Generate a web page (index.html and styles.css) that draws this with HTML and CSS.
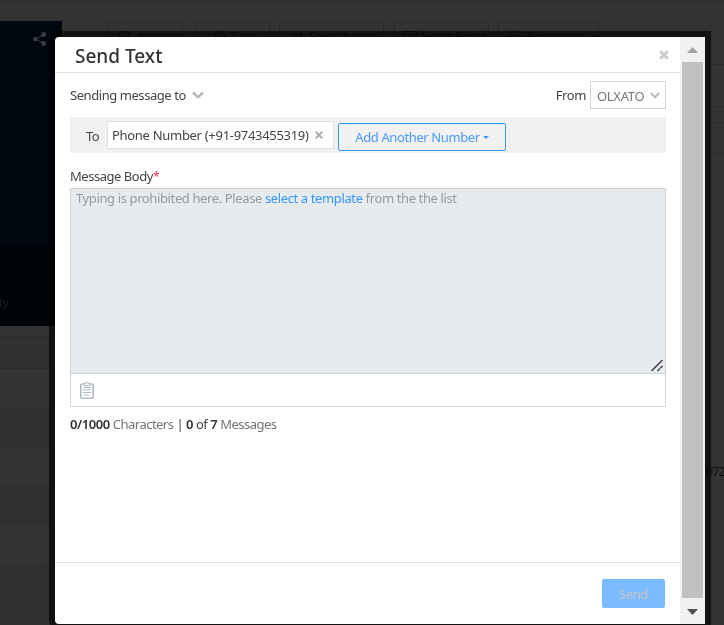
FILE: index.html
```html
<!DOCTYPE html>
<html lang="en">
<head>
<meta charset="utf-8">
<title>Send Text</title>
<link rel="stylesheet" href="styles.css">
</head>
<body>
<div class="page">
  <div class="left">
    <div class="profile">
      <div class="profile-top">
        <svg class="share" width="14" height="14" viewBox="0 0 14 14"><path d="M11 2.500 3 7l8 4.500" fill="none" stroke="#393d40"/><circle cx="10.700" cy="2.500" r="2.400"/><circle cx="2.300" cy="7" r="2.300"/><circle cx="10.700" cy="11.500" r="2.400"/></svg>
      </div>
      <div class="profile-bottom">ty</div>
    </div>
    <div class="row first"></div>
    <div class="row head"></div>
    <div class="row r1"></div>
    <div class="row odd"></div>
    <div class="row"></div>
    <div class="row odd"></div>
    <div class="row"></div>
    <div class="row odd last"></div>
  </div>
  <div class="middle">
    <div class="tool b1"><svg width="14" height="13" viewBox="0 0 14 13"><path d="M.5 12V2h10v3M1 1h10M6 8a3 3 0 1 1 6 0 3 3 0 0 1-6 0"/></svg>Activity</div>
    <div class="tool b2"><svg width="12" height="13" viewBox="0 0 12 13"><path d="M1 2h10v10H1zM4 2V0h4v2M3 7l2 2 3-4"/></svg>Task</div>
    <div class="tool b3"><svg width="14" height="12" viewBox="0 0 14 12"><path d="M0 1h2l3 9h6M3 3h4M10 1v5M8 2l4 3M12 2l-4 3"/></svg>Sales Activ...</div>
    <div class="tool b4"><svg width="14" height="11" viewBox="0 0 14 11"><path d="M.5.500h13v10H.500zl6.500 6 6.500-6"/></svg>Send Email</div>
    <div class="tool b5"><svg width="14" height="12" viewBox="0 0 14 12"><path d="M0 1h8M0 5h13v6H0zM10 1h3"/></svg>Processes<i class="tri"></i></div>
  </div>
  <div class="right">
    <div class="r a"></div><div class="r b"></div><div class="r c"></div><div class="r d"></div>
    <span class="num">072</span>
  </div>
</div>
<div class="modal">
  <div class="content">
    <header>
      <h1><span class="title">Send Text</span></h1>
      <svg class="close" width="10" height="10" viewBox="0 0 10 10"><path d="m1.200 1.200 7.600 7.600m0-7.600L1.200 8.800" fill="none" stroke="#ccc" stroke-width="3"/></svg>
    </header>
    <main>
      <div class="sender">
        <span class="sending">Sending message to</span>
        <svg class="chev" width="12" height="8" viewBox="0 0 12 8"><path d="m1 1.500 5 4.700 5-4.700" fill="none" stroke="#b9b9b9" stroke-width="2.500"/></svg>
        <span class="from">From</span>
        <div class="select"><span class="olx">OLXATO</span><svg width="10" height="7" viewBox="0 0 10 7"><path d="m.7 1 4.300 4.200L9.300 1" fill="none" stroke="#bbb" stroke-width="2.200"/></svg></div>
      </div>
      <div class="to">
        <span class="to-label">To</span>
        <div class="chip"><span class="phone">Phone Number (+91-9743455319)</span><svg width="8" height="8" viewBox="0 0 8 8"><path d="m.7.700 6.600 6.600m0-6.600L.7 7.300" fill="none" stroke="#aaa" stroke-width="1.900"/></svg></div>
        <div class="add"><span class="add-text">Add Another Number</span><i class="caret"></i></div>
      </div>
      <div class="label"><span class="body-label">Message Body</span><span class="star">*</span></div>
      <div class="editor">
        <div class="area"><span class="hint">Typing is prohibited here. Please <a>select a template</a> from the the list</span>
          <svg class="grip" width="13" height="13" viewBox="0 0 13 13"><path d="M.5 12 11.500 1M6.500 12 9 9.500M9.500 9l2-2" fill="none" stroke="#4d4d4d" stroke-width="1.700"/></svg>
        </div>
        <div class="tools"><svg width="14" height="17" viewBox="0 0 14 17"><rect x=".8" y="2" width="12.400" height="14.200" rx="1" fill="#fff" stroke="#b3bac2" stroke-width="1.600"/><path d="M4 3.500v-2h1.800V.600h2.400v.900H10v2z" fill="#fff" stroke="#b3bac2"/><path d="M3 5.500h8M3 8h8M3 10.500h8M3 13h6" fill="none" stroke="#b3bac2" stroke-width="1.200"/></svg></div>
      </div>
      <div class="count"><span class="counter"><b>0/1000</b> Characters <em>|</em> <b>0</b> <em>of</em> <b>7</b> Messages</span></div>
    </main>
    <footer><div class="send"><span>Send</span></div></footer>
  </div>
  <div class="scroll">
    <svg width="11" height="6" viewBox="0 0 11 6"><path d="M0 6l5.500-6L11 6z" fill="#a3a3a3"/></svg>
    <div class="thumb"></div>
    <svg width="11" height="6" viewBox="0 0 11 6"><path d="M0 0h11L5.500 6z" fill="#505050"/></svg>
  </div>
</div>
</body>
</html>
```
FILE: styles.css
```css
* { box-sizing: border-box; }
body { margin: 0; background: #333; font: 13px/18px "Noto Sans", "Open Sans", sans-serif; color: #444; overflow: hidden; }
svg { display: block; flex: none; }
span { white-space: nowrap; }

.page { width: 724px; height: 625px; display: flex; border-top: 1px solid #333; background: linear-gradient(#2a2a2a, #2a2a2a) 0 0 / 100% 1px no-repeat; overflow: hidden; }
.left { width: 62px; padding-top: 20px; flex: none; }
.profile-top { height: 225px; background: #00070e; padding: 11px 0 0 33px; }
.share { fill: #393d40; }
.profile-bottom { height: 80px; background: #000406; color: #0e1f2a; padding-top: 48px; font-size: 12px; letter-spacing: -.5px; text-indent: -1px; }
.row { height: 39px; }
.row.first { height: 11px; border-bottom: 1px solid #2b2b2b; }
.row.head { height: 32px; border-bottom: 1px solid #2b2b2b; background: #313131; }
.row.odd { background: #303030; }
.row.last { height: 61px; }
.middle { width: 592px; display: flex; padding: 21px 0 0 45px; align-items: flex-start; flex: none; }
.tool { height: 40px; border: 1px solid #292929; border-radius: 2px; color: #151515; font-size: 13px; letter-spacing: -.3px; line-height: 26px; display: flex; flex: none; gap: 4px; padding-left: 11px; white-space: nowrap; }
.tool svg { margin-top: 8px; fill: none; stroke: #151515; }
.b1 { width: 76px; }
.b2 { width: 75px; margin-left: 12px; padding-left: 18px; }
.b3 { width: 105px; margin-left: 9px; }
.b4 { width: 95px; margin-left: 10px; padding-left: 9px; }
.b5 { width: 101px; margin-left: 9px; padding-left: 10px; }
.tri { margin: 13px 0 0 2px; border: 4px solid transparent; border-top-color: #151515; height: 0; }
.right { flex: 1; }
.r { border-bottom: 1px solid #2a2a2a; }
.r.a { height: 64px; }
.r.b { height: 42px; }
.r.c { height: 16px; }
.r.d { height: 31px; }
.num { display: block; margin: 309px 0 0 52px; color: #101010; font-size: 12px; letter-spacing: -.5px; }

.modal { position: fixed; left: 55px; top: 37px; width: 650px; height: 587px; display: flex; background: #fff; border-radius: 4px 0 0 4px; box-shadow: 0 0 0 6px rgba(0, 0, 0, .6), 0 0 5px 6px rgba(0, 0, 0, .1); }
.content { width: 625px; display: flex; flex-direction: column; }
header { height: 36px; border-bottom: 1px solid #dee0e3; display: flex; justify-content: space-between; align-items: center; padding: 0 11px 0 20px; }
h1 { margin: 3px 0 0; font-size: 19px; line-height: 28px; font-weight: 500; color: #333; }
main { flex: 1; padding: 8px 14px 0 15px; }
.sender { height: 28px; display: flex; align-items: center; }
.sending { letter-spacing: -.44px; }
.chev { margin-left: 6px; }
.from { margin-left: auto; margin-right: 4px; letter-spacing: -.4px; }
.select { width: 76px; height: 28px; border: 1px solid #ced4da; display: flex; align-items: center; justify-content: space-between; padding: 0 5px 0 6px; color: #777; }
.olx { padding-top: 2px; letter-spacing: -.3px; }
.to { margin-top: 8px; height: 36px; background: #f1f1f1; display: flex; padding: 4px 0 0 16px; }
.to-label { width: 21px; padding-top: 6px; letter-spacing: -.5px; }
.chip { width: 227px; height: 28px; border: 1px solid #dee2e6; background: #fff; display: flex; align-items: center; justify-content: space-between; padding: 0 10px 0 4px; }
.phone { letter-spacing: -.3px; }
.add { margin: 2px 0 0 4px; width: 168px; height: 28px; border: 1px solid #3498ff; border-radius: 2px; display: flex; align-items: center; justify-content: center; gap: 3px; color: #4a9bf8; }
.add-text { letter-spacing: -.39px; }
.caret { border: 3px solid transparent; border-top-color: #3498ff; border-bottom: 0; }
.label { margin-top: 14px; height: 21px; line-height: 18px; }
.body-label { letter-spacing: -.47px; }
.star { color: #f35; font-size: 12px; }
.editor { height: 219px; border: 1px solid #ced4da; }
.area { height: 185px; background: #e8ebee; border-bottom: 1px solid #ced4da; padding: 0 1px 1px 5px; color: #999; display: flex; justify-content: space-between; }
.hint { letter-spacing: -.38px; }
.area a { color: #3498ff; }
.grip { align-self: flex-end; }
.tools { padding: 8px 9px; }
.count { margin-top: 8px; color: #70757a; letter-spacing: -.52px; word-spacing: .1px; }
.count b { color: #333; font-weight: 600; letter-spacing: -.42px; }
.count em { font-style: normal; color: #444; }
footer { height: 62px; border-top: 1px solid #dee0e3; padding: 16px 15px 0 0; display: flex; justify-content: flex-end; }
.send { width: 63px; height: 29px; border-radius: 2px; background: #7abcff; color: #c6c6c6; letter-spacing: -.4px; display: flex; align-items: center; justify-content: center; padding-top: 1px; }
.scroll { width: 25px; background: #f1f1f1; display: flex; flex-direction: column; align-items: center; padding: 10px 0 9px; gap: 9px; border-left: 0; }
.scroll svg { margin-right: 1px; }
.thumb { flex: 1; width: 21px; background: #c1c1c1; margin: 0 0 2px; }
```
